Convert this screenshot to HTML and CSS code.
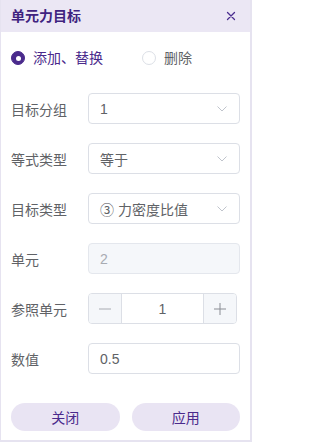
FILE: index.html
```html
<!DOCTYPE html>
<html lang="zh-CN">
<head>
<meta charset="utf-8">
<title>单元力目标</title>
<link rel="stylesheet" href="styles.css">
</head>
<body>
<div class="dialog">
  <div class="header">
    <span class="title">单元力目标</span>
    <svg class="close" width="10" height="10" viewBox="0 0 10 10"><path d="M1.5 1.5L8.5 8.5M8.5 1.5L1.5 8.5" stroke="#4b2d8f" stroke-width="1.3" fill="none" stroke-linecap="round"/></svg>
  </div>
  <div class="body">
    <div class="radios">
      <label class="radio checked"><span class="dot"></span><span class="rtext">添加、替换</span></label>
      <label class="radio"><span class="dot"></span><span class="rtext">删除</span></label>
    </div>
    <div class="row">
      <span class="label">目标分组</span>
      <div class="field select"><span class="value">1</span><svg class="chev" width="10" height="6" viewBox="0 0 10 6"><path d="M0.5 0.5L5 5L9.5 0.5" stroke="#c0c4cc" stroke-width="1" fill="none"/></svg></div>
    </div>
    <div class="row">
      <span class="label">等式类型</span>
      <div class="field select"><span class="value">等于</span><svg class="chev" width="10" height="6" viewBox="0 0 10 6"><path d="M0.5 0.5L5 5L9.5 0.5" stroke="#c0c4cc" stroke-width="1" fill="none"/></svg></div>
    </div>
    <div class="row">
      <span class="label">目标类型</span>
      <div class="field select"><span class="value">③ 力密度比值</span><svg class="chev" width="10" height="6" viewBox="0 0 10 6"><path d="M0.5 0.5L5 5L9.5 0.5" stroke="#c0c4cc" stroke-width="1" fill="none"/></svg></div>
    </div>
    <div class="row">
      <span class="label">单元</span>
      <div class="field disabled"><span class="value">2</span></div>
    </div>
    <div class="row">
      <span class="label">参照单元</span>
      <div class="stepper">
        <span class="step minus"><svg width="12" height="12" viewBox="0 0 12 12"><path d="M0 6H12" stroke="#a8abb2" stroke-width="1"/></svg></span>
        <span class="num">1</span>
        <span class="step plus"><svg width="12" height="12" viewBox="0 0 12 12"><path d="M0 6H12M6 0V12" stroke="#8a8d94" stroke-width="1"/></svg></span>
      </div>
    </div>
    <div class="row">
      <span class="label">数值</span>
      <div class="field"><span class="value">0.5</span></div>
    </div>
    <div class="buttons">
      <button class="btn">关闭</button>
      <button class="btn">应用</button>
    </div>
  </div>
</div>
</body>
</html>
```
FILE: styles.css
```css
* { box-sizing: border-box; }
html, body { margin: 0; padding: 0; background: #fff; }
body { font-family: "Liberation Sans", "Noto Sans CJK SC", sans-serif; }
.dialog {
  width: 252px;
  height: 442px;
  border: 1px solid #e6e3f0;
  border-width: 0 2px 2px 1px;
  display: flex;
  flex-direction: column;
}
.header {
  height: 32px;
  background: #ebe7f4;
  display: flex;
  align-items: center;
  justify-content: space-between;
  padding: 0 14px 0 10px;
}
.title { font-size: 14px; font-weight: 700; color: #3f2380; line-height: 1; }
.close { display: block; }
.body { padding: 0 10px; }
.radios {
  margin-top: 16px;
  height: 20px;
  display: flex;
  align-items: center;
}
.radio { display: flex; align-items: center; font-size: 14px; color: #606266; }
.radio + .radio { margin-left: 39px; }
.dot {
  width: 14px; height: 14px; border-radius: 50%;
  border: 1px solid #dcdfe6; background: #fff;
  display: inline-block; position: relative;
}
.checked .dot { background: #4a2a8c; border-color: #4a2a8c; }
.checked .dot::after {
  content: ""; position: absolute; left: 3.5px; top: 3.5px;
  width: 5px; height: 5px; border-radius: 50%; background: #fff;
}
.rtext { margin-left: 8px; line-height: 20px; }
.checked .rtext { color: #4a2a8c; }
.row {
  display: flex;
  align-items: center;
  height: 31px;
  margin-top: 19px;
}
.radios + .row { margin-top: 25px; }
.label { width: 77px; font-size: 14px; color: #606266; }
.field {
  width: 152px; height: 31px;
  border: 1px solid #dcdfe6; border-radius: 4px;
  display: flex; align-items: center; justify-content: space-between;
  padding: 0 12px 0 11px;
  font-size: 14px; color: #606266;
  background: #fff;
}
.field.disabled { background: #f5f7fa; border-color: #e4e7ed; color: #a8abb2; }
.chev { display: block; }
.stepper {
  width: 149px; height: 31px;
  border: 1px solid #dcdfe6; border-radius: 4px;
  display: flex; overflow: hidden;
}
.step {
  width: 33px; background: #f5f7fa;
  display: flex; align-items: center; justify-content: center;
}
.minus { border-right: 1px solid #dcdfe6; }
.plus { border-left: 1px solid #dcdfe6; }
.num { flex: 1; display: flex; align-items: center; justify-content: center; font-size: 14px; color: #606266; }
.buttons {
  margin-top: 29px;
  display: flex;
  gap: 12px;
}
.btn {
  width: 109px; height: 28px;
  border: none; border-radius: 14px;
  background: #e9e4f3; color: #4a2a8c;
  font-family: "Liberation Sans", "Noto Sans CJK SC", sans-serif;
  font-size: 14px; padding: 0;
}
```
